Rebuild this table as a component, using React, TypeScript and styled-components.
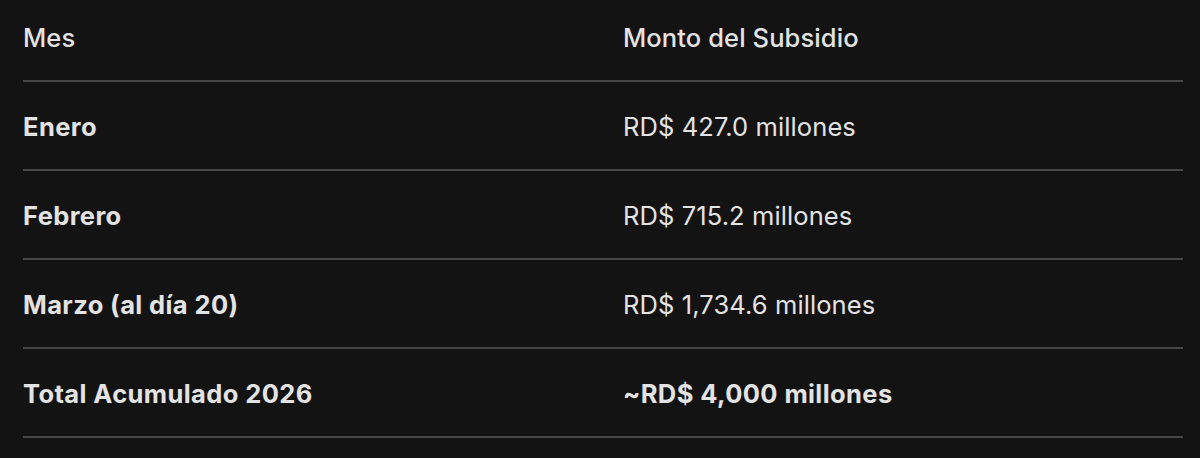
import React from 'react';
import styled, { createGlobalStyle } from 'styled-components';

const GlobalStyle = createGlobalStyle`
  html, body {
    margin: 0;
    padding: 0;
    background: #131313;
  }
  body {
    font-family: Inter, "Noto Sans", "Liberation Sans", sans-serif;
    color: #e3e3e3;
  }
`;

const Page = styled('div')`
  width: 1200px;
  height: 458px;
  overflow: hidden;
  background: #131313;
  padding: 0 17px 0 23px;
  box-sizing: border-box;
`;

const Table = styled('div')`
  margin-top: -7px;
  display: flex;
  flex-direction: column;
`;

const Row = styled('div')`
  display: grid;
  grid-template-columns: 600px 1fr;
  height: 89px;
  box-sizing: border-box;
  border-bottom: 2px solid #474747;
  align-items: center;
  padding-top: 2px;
`;

const Cell = styled('div')<{ $weight: number }>`
  font-size: 25.5px;
  font-weight: ${(p) => p.$weight};
  letter-spacing: ${(p) => (p.$weight > 500 ? '0.4px' : '0.1px')};
  color: #e3e3e3;
  white-space: nowrap;
`;

const rows = [
  { month: 'Enero', amount: 'RD$ 427.0 millones' },
  { month: 'Febrero', amount: 'RD$ 715.2 millones' },
  { month: 'Marzo (al día 20)', amount: 'RD$ 1,734.6 millones' },
];

const App: React.FC = () => {
  return (
    <Page>
      <GlobalStyle />
      <Table>
        <Row>
          <Cell $weight={500}>Mes</Cell>
          <Cell $weight={500}>Monto del Subsidio</Cell>
        </Row>
        {rows.map((r) => (
          <Row key={r.month}>
            <Cell $weight={650}>{r.month}</Cell>
            <Cell $weight={400}>{r.amount}</Cell>
          </Row>
        ))}
        <Row>
          <Cell $weight={650}>Total Acumulado 2026</Cell>
          <Cell $weight={650}>~RD$ 4,000 millones</Cell>
        </Row>
      </Table>
    </Page>
  );
};

export default App;
